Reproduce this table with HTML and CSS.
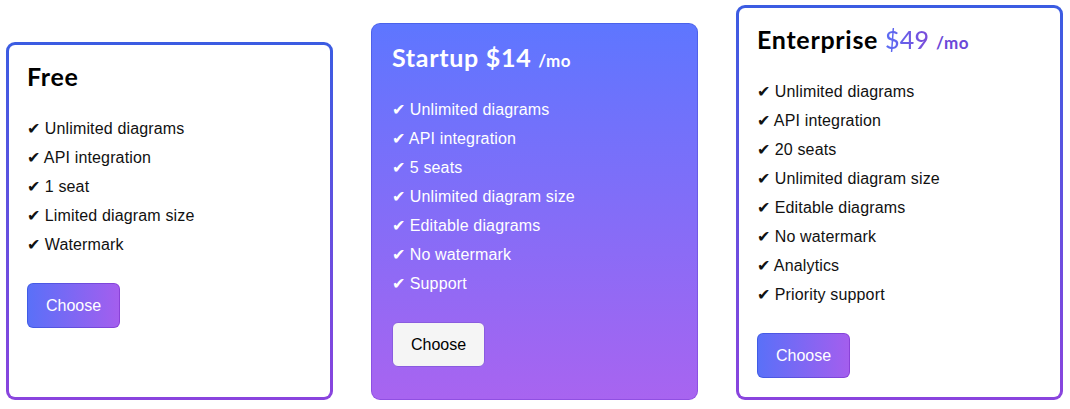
FILE: index.html
```html
<!DOCTYPE html>
<html lang="en">
<head>
<meta charset="utf-8">
<title>Pricing</title>
<link rel="stylesheet" href="styles.css">
</head>
<body>
<main class="plans">
  <section class="card card-free">
    <h2 class="title">Free</h2>
    <ul class="features">
      <li>✔ Unlimited diagrams</li>
      <li>✔ API integration</li>
      <li>✔ 1 seat</li>
      <li>✔ Limited diagram size</li>
      <li>✔ Watermark</li>
    </ul>
    <button class="btn btn-gradient">Choose</button>
  </section>
  <section class="card card-startup">
    <h2 class="title">Startup $14 <span class="per">/mo</span></h2>
    <ul class="features">
      <li>✔ Unlimited diagrams</li>
      <li>✔ API integration</li>
      <li>✔ 5 seats</li>
      <li>✔ Unlimited diagram size</li>
      <li>✔ Editable diagrams</li>
      <li>✔ No watermark</li>
      <li>✔ Support</li>
    </ul>
    <button class="btn btn-light">Choose</button>
  </section>
  <section class="card card-enterprise">
    <h2 class="title">Enterprise <span class="price">$49</span> <span class="per per-purple">/mo</span></h2>
    <ul class="features">
      <li>✔ Unlimited diagrams</li>
      <li>✔ API integration</li>
      <li>✔ 20 seats</li>
      <li>✔ Unlimited diagram size</li>
      <li>✔ Editable diagrams</li>
      <li>✔ No watermark</li>
      <li>✔ Analytics</li>
      <li>✔ Priority support</li>
    </ul>
    <button class="btn btn-gradient">Choose</button>
  </section>
</main>
</body>
</html>
```
FILE: styles.css
```css
* { box-sizing: border-box; }

html, body {
  margin: 0;
  background: #ffffff;
}

body {
  font-family: "Liberation Sans", Arial, sans-serif;
  font-size: 16px;
  color: #111111;
}

.plans {
  display: flex;
  align-items: stretch;
  gap: 38px;
  padding: 5px 7px 9px 6px;
  height: 409px;
}

.card {
  flex: 1 1 0;
  border: 3px solid transparent;
  border-radius: 9px;
  padding: 17px 18px 18px;
  background:
    linear-gradient(#ffffff, #ffffff) padding-box,
    linear-gradient(180deg, #3b5ce2 0%, #8a44de 100%) border-box;
}

.card-free { margin-top: 37px; }

.card-startup {
  margin-top: 18px;
  border-width: 1px;
  padding: 19px 20px 20px;
  color: #ffffff;
  background:
    linear-gradient(180deg, #5e76ff 0%, #a864f0 100%) padding-box,
    linear-gradient(180deg, #4a62ea 0%, #9050e2 100%) border-box;
}

.title {
  margin: 0;
  font-family: "Lato", "Liberation Sans", sans-serif;
  font-size: 25px;
  line-height: 29px;
  font-weight: 700;
  letter-spacing: 0.7px;
  color: #000000;
}

.title span { line-height: 1; }

.card-startup .title { color: #ffffff; }

.price {
  font-weight: 500;
  letter-spacing: 0.3px;
  background: linear-gradient(90deg, #5a6df4, #7b4bd9);
  -webkit-background-clip: text;
  background-clip: text;
  color: transparent;
}

.per {
  font-size: 17px;
  font-weight: 700;
  letter-spacing: 0.5px;
}

.per-purple { color: #6a48d8; }

.features {
  list-style: none;
  margin: 23px 0 24px;
  padding: 0;
}

.features li {
  line-height: 29px;
  letter-spacing: 0.15px;
}

.btn {
  font-family: "Liberation Sans", Arial, sans-serif;
  font-size: 16px;
  line-height: 19px;
  padding: 12px 18px;
  border-radius: 6px;
  cursor: pointer;
}

.btn-gradient {
  color: #ffffff;
  border: 1px solid transparent;
  background:
    linear-gradient(90deg, #5a70f8 0%, #a45eee 100%) padding-box,
    linear-gradient(90deg, #3f5ce6 0%, #8a42d8 100%) border-box;
}

.btn-light {
  color: #000000;
  background: #f5f5f5;
  border: 1px solid #8a5ce0;
}
```
